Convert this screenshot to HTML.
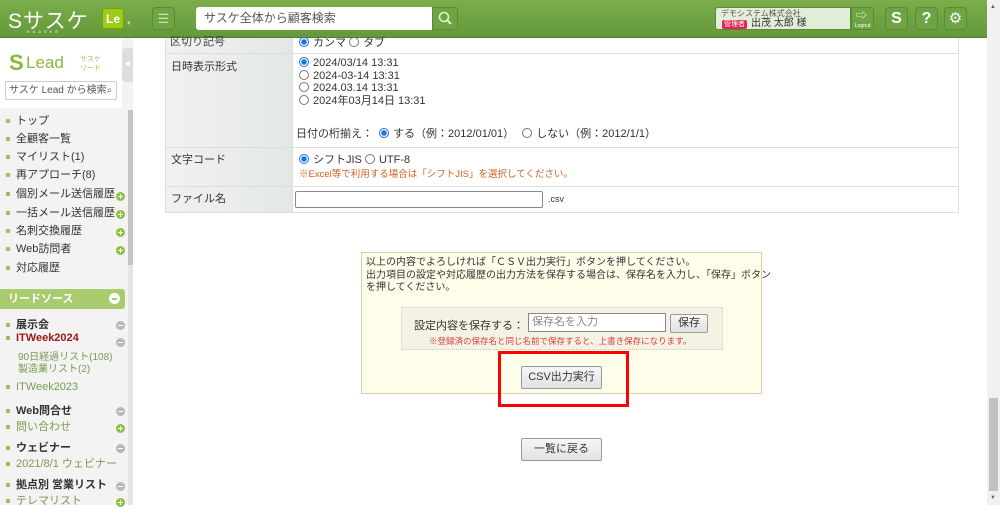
<!DOCTYPE html><html><head><meta charset="utf-8"><style>
*{box-sizing:border-box;margin:0;padding:0}
body{width:1000px;height:505px;overflow:hidden;position:relative;background:#fff;font-family:"Liberation Sans","Noto Sans CJK JP",sans-serif;font-size:11px;color:#333}
.a{position:absolute}
#hdr{left:0;top:0;width:987px;height:38px;background:linear-gradient(#7bae4b,#64983a);border-bottom:1px solid #4f7d2d}
.ib{border:1px solid #5a8a35;border-radius:4px;background:#6ea444}
#side{left:0;top:38px;width:133px;height:467px;background:#f3f3f3}
.nav{left:6px;font-size:11px;color:#333;white-space:nowrap}
.nav:before{content:"";display:inline-block;width:4px;height:4px;background:#9cc45c;margin-right:6px;vertical-align:middle}
.plus,.minus{left:116px;width:9px;height:9px;border-radius:50%}
.plus{background:#8ec045}
.plus:before{content:"";position:absolute;left:2px;top:4px;width:5px;height:1px;background:#fff}
.plus:after{content:"";position:absolute;left:4px;top:2px;width:1px;height:5px;background:#fff}
.minus{background:#b8b8b8}.minus:after{content:"";position:absolute;left:2px;top:4px;width:5px;height:1px;background:#fff}
.sub{color:#7a9a50}
.lab{background:linear-gradient(90deg,#f0f2f0,#e4e8e4);color:#444}
.rad{display:inline-block;width:10px;height:10px;border:1px solid #777;border-radius:50%;vertical-align:-1px;margin-right:4px;background:#fff}
.rad.on{border-color:#1a73e8;background:radial-gradient(#1a73e8 2.5px,#fff 3px)}
.btn{background:linear-gradient(#f6f6f6,#e2e2e2);border:1px solid #999;border-radius:2px;text-align:center;font-size:11px;color:#333}
</style></head><body>
<div id="hdr" class="a">
 <div class="a" style="left:8px;top:5px;color:#fff;font-size:21px;letter-spacing:1px">Sサスケ</div>
 <div class="a" style="left:27px;top:29px;color:#fff;font-size:4px;letter-spacing:3px">SAASKE</div>
 <div class="a" style="left:102px;top:8px;width:22px;height:21px;background:#9ccc18;border:1px solid #7aa010;border-radius:3px;color:#fff;font-weight:bold;font-size:12px;text-align:center;line-height:20px">Le</div>
 <div class="a" style="left:127px;top:19px;color:#cfe2b8;font-size:7px">▾</div>
 <div class="a ib" style="left:152px;top:7px;width:23px;height:23px;color:#cfe4b4;text-align:center;line-height:22px;font-size:13px">☰</div>
 <div class="a" style="left:196px;top:7px;width:236px;height:23px;background:#fff;border-radius:3px 0 0 3px;color:#555;font-size:12px;line-height:23px;padding-left:8px">サスケ全体から顧客検索</div>
 <div class="a ib" style="left:432px;top:7px;width:26px;height:23px;border-radius:0 3px 3px 0"><svg width="24" height="21"><circle cx="11" cy="9" r="4.5" fill="none" stroke="#e4f0d8" stroke-width="1.6"/><path d="M14 12l4 4" stroke="#e4f0d8" stroke-width="2"/></svg></div>
 <div class="a" style="left:715px;top:7px;width:136px;height:23px;background:#e3eed8;border:1px solid #5a8a35;border-radius:3px 0 0 3px"></div>
 <div class="a" style="left:721px;top:8px;font-size:8px;color:#555">デモシステム株式会社</div>
 <div class="a" style="left:722px;top:20px;font-size:7px;color:#fff;background:#e0245a;border-radius:2px;padding:0 2px;line-height:9px">管理者</div>
 <div class="a" style="left:751px;top:18px;font-size:10px;color:#333;line-height:12px">出茂 太郎 様</div>
 <div class="a ib" style="left:851px;top:7px;width:23px;height:23px;border-radius:0 3px 3px 0;color:#fff;font-size:5px;text-align:center;padding-top:15px">Logout</div>
 <div class="a" style="left:856px;top:7px;color:#fff;font-size:11px">⇨</div>
 <div class="a ib" style="left:885px;top:7px;width:23px;height:23px;color:#fff;font-weight:bold;font-size:16px;text-align:center;line-height:22px">S</div>
 <div class="a ib" style="left:915px;top:7px;width:23px;height:23px;color:#fff;font-weight:bold;font-size:16px;text-align:center;line-height:22px">?</div>
 <div class="a ib" style="left:944px;top:7px;width:23px;height:23px;color:#fff;font-size:15px;text-align:center;line-height:22px">⚙</div>
</div>
<div class="a" style="left:987px;top:0;width:13px;height:505px;background:#f1f1f1"></div>
<div class="a" style="left:989px;top:398px;width:9px;height:93px;background:#c1c1c1"></div>
<div class="a" style="left:990px;top:4px;font-size:6px;color:#666">▲</div>
<div class="a" style="left:990px;top:495px;font-size:6px;color:#666">▼</div>

<div id="side" class="a">
 <div class="a" style="left:0;top:0;width:122px;height:70px;background:#fff"></div>
 <div class="a" style="left:9px;top:12px;color:#8cb83a;font-size:22px;font-weight:bold">S</div>
 <div class="a" style="left:26px;top:15px;color:#8cb83a;font-size:17px">Lead</div>
 <div class="a" style="left:80px;top:17px;color:#9cc45c;font-size:7px;line-height:9px">サスケ<br>リード</div>
 <div class="a" style="left:5px;top:43px;width:112px;height:19px;background:#fff;border:1px solid #ccc;border-radius:2px;font-size:10px;color:#555;line-height:17px;padding-left:3px">サスケ Lead から検索⌕</div>
 <div class="a" style="left:122px;top:10px;width:11px;height:34px;background:#ddd;border-radius:4px 0 0 4px;color:#fff;font-size:6px;line-height:34px;text-align:center">◀</div>
 <div class="a" style="left:128px;top:72px;width:5px;height:395px;background:#e4e4e4"></div>
 <div class="a" style="left:128px;top:72px;width:5px;height:155px;background:#c4c4c4"></div>
 <div class="a nav" style="top:74px">トップ</div>
 <div class="a nav" style="top:92px">全顧客一覧</div>
 <div class="a nav" style="top:110px">マイリスト(1)</div>
 <div class="a nav" style="top:128px">再アプローチ(8)</div>
 <div class="a nav" style="top:147px">個別メール送信履歴</div><div class="a plus" style="top:154px"></div>
 <div class="a nav" style="top:166px">一括メール送信履歴</div><div class="a plus" style="top:172px"></div>
 <div class="a nav" style="top:184px">名刺交換履歴</div><div class="a plus" style="top:190px"></div>
 <div class="a nav" style="top:202px">Web訪問者</div><div class="a plus" style="top:208px"></div>
 <div class="a nav" style="top:221px">対応履歴</div>
 <div class="a" style="left:0;top:251px;width:125px;height:20px;background:#a9cd6e;border-radius:0 3px 3px 0;color:#fff;font-weight:bold;font-size:11px;line-height:20px;padding-left:8px">リードソース</div>
 <div class="a" style="left:109px;top:255px;width:11px;height:11px;border-radius:50%;background:#fff"></div><div class="a" style="left:112px;top:260px;width:5px;height:2px;background:#a9cd6e"></div>
 <div class="a nav" style="top:278px;font-weight:bold">展示会</div><div class="a minus" style="top:283px"></div>
 <div class="a nav" style="top:294px;color:#a01818;font-weight:bold">ITWeek2024</div><div class="a minus" style="top:300px"></div>
 <div class="a sub" style="left:18px;top:310px;font-size:10px">90日経過リスト(108)</div>
 <div class="a sub" style="left:18px;top:322px;font-size:10px">製造業リスト(2)</div>
 <div class="a nav sub" style="top:343px">ITWeek2023</div>
 <div class="a nav" style="top:364px;font-weight:bold">Web問合せ</div><div class="a minus" style="top:369px"></div>
 <div class="a nav sub" style="top:380px">問い合わせ</div><div class="a plus" style="top:386px"></div>
 <div class="a nav" style="top:401px;font-weight:bold">ウェビナー</div><div class="a minus" style="top:406px"></div>
 <div class="a nav sub" style="top:417px">2021/8/1 ウェビナー</div>
 <div class="a nav" style="top:438px;font-weight:bold">拠点別 営業リスト</div><div class="a minus" style="top:444px"></div>
 <div class="a nav sub" style="top:454px">テレマリスト</div><div class="a plus" style="top:460px"></div>
</div>

<div class="a" style="left:165px;top:38px;width:794px;height:175px;border:1px solid #ddd;border-top:none"></div>
<div class="a lab" style="left:166px;top:38px;width:126px;height:174px"></div>
<div class="a" style="left:292px;top:38px;width:1px;height:175px;background:#ddd"></div>
<div class="a" style="left:165px;top:53px;width:794px;height:1px;background:#ddd"></div>
<div class="a" style="left:165px;top:147px;width:794px;height:1px;background:#ddd"></div>
<div class="a" style="left:165px;top:186px;width:794px;height:1px;background:#ddd"></div>
<div class="a" style="left:170px;top:33px;color:#444">区切り記号</div>
<div class="a" style="left:299px;top:34px"><span class="rad on"></span>カンマ <span class="rad"></span>タブ</div>
<div class="a" style="left:0;top:38px;width:987px;height:0;box-shadow:0 1px 3px rgba(0,0,0,.3)"></div>
<div class="a" style="left:171px;top:58px">日時表示形式</div>
<div class="a" style="left:299px;top:57px;line-height:12.5px"><span class="rad on"></span>2024/03/14 13:31<br><span class="rad"></span>2024-03-14 13:31<br><span class="rad"></span>2024.03.14 13:31<br><span class="rad"></span>2024年03月14日 13:31</div>
<div class="a" style="left:296px;top:125px">日付の桁揃え： <span class="rad on" style="margin-left:3px"></span>する（例：2012/01/01） <span class="rad" style="margin-left:5px"></span>しない（例：2012/1/1）</div>
<div class="a" style="left:171px;top:151px">文字コード</div>
<div class="a" style="left:299px;top:151px"><span class="rad on"></span>シフトJIS <span class="rad"></span>UTF-8</div>
<div class="a" style="left:299px;top:166px;font-size:9.5px;color:#d06020">※Excel等で利用する場合は「シフトJIS」を選択してください。</div>
<div class="a" style="left:171px;top:190px">ファイル名</div>
<div class="a" style="left:295px;top:191px;width:248px;height:17px;border:1px solid #888;border-radius:2px"></div>
<div class="a" style="left:548px;top:194px;font-size:9px">.csv</div>

<div class="a" style="left:361px;top:252px;width:401px;height:142px;background:#fefde9;border:1px solid #d3cfae"></div>
<div class="a" style="left:366px;top:257px;font-size:10px;line-height:12.5px;color:#333">以上の内容でよろしければ「ＣＳＶ出力実行」ボタンを押してください。<br>出力項目の設定や対応履歴の出力方法を保存する場合は、保存名を入力し、「保存」ボタン<br>を押してください。</div>
<div class="a" style="left:401px;top:307px;width:322px;height:43px;background:#f5f2e3;border:1px dotted #ccc"></div>
<div class="a" style="left:414px;top:317px;font-size:11px">設定内容を保存する：</div>
<div class="a" style="left:528px;top:313px;width:138px;height:19px;background:#fff;border:1px solid #888;font-size:11px;color:#888;line-height:17px;padding-left:3px">保存名を入力</div>
<div class="a btn" style="left:670px;top:314px;width:38px;height:19px;line-height:17px">保存</div>
<div class="a" style="left:429px;top:335px;font-size:8.5px;color:#d04040">※登録済の保存名と同じ名前で保存すると、上書き保存になります。</div>
<div class="a" style="left:498px;top:351px;width:131px;height:56px;border:3px solid #f00"></div>
<div class="a btn" style="left:521px;top:366px;width:81px;height:23px;line-height:21px">CSV出力実行</div>
<div class="a btn" style="left:521px;top:438px;width:81px;height:23px;line-height:21px">一覧に戻る</div>
</body></html>
